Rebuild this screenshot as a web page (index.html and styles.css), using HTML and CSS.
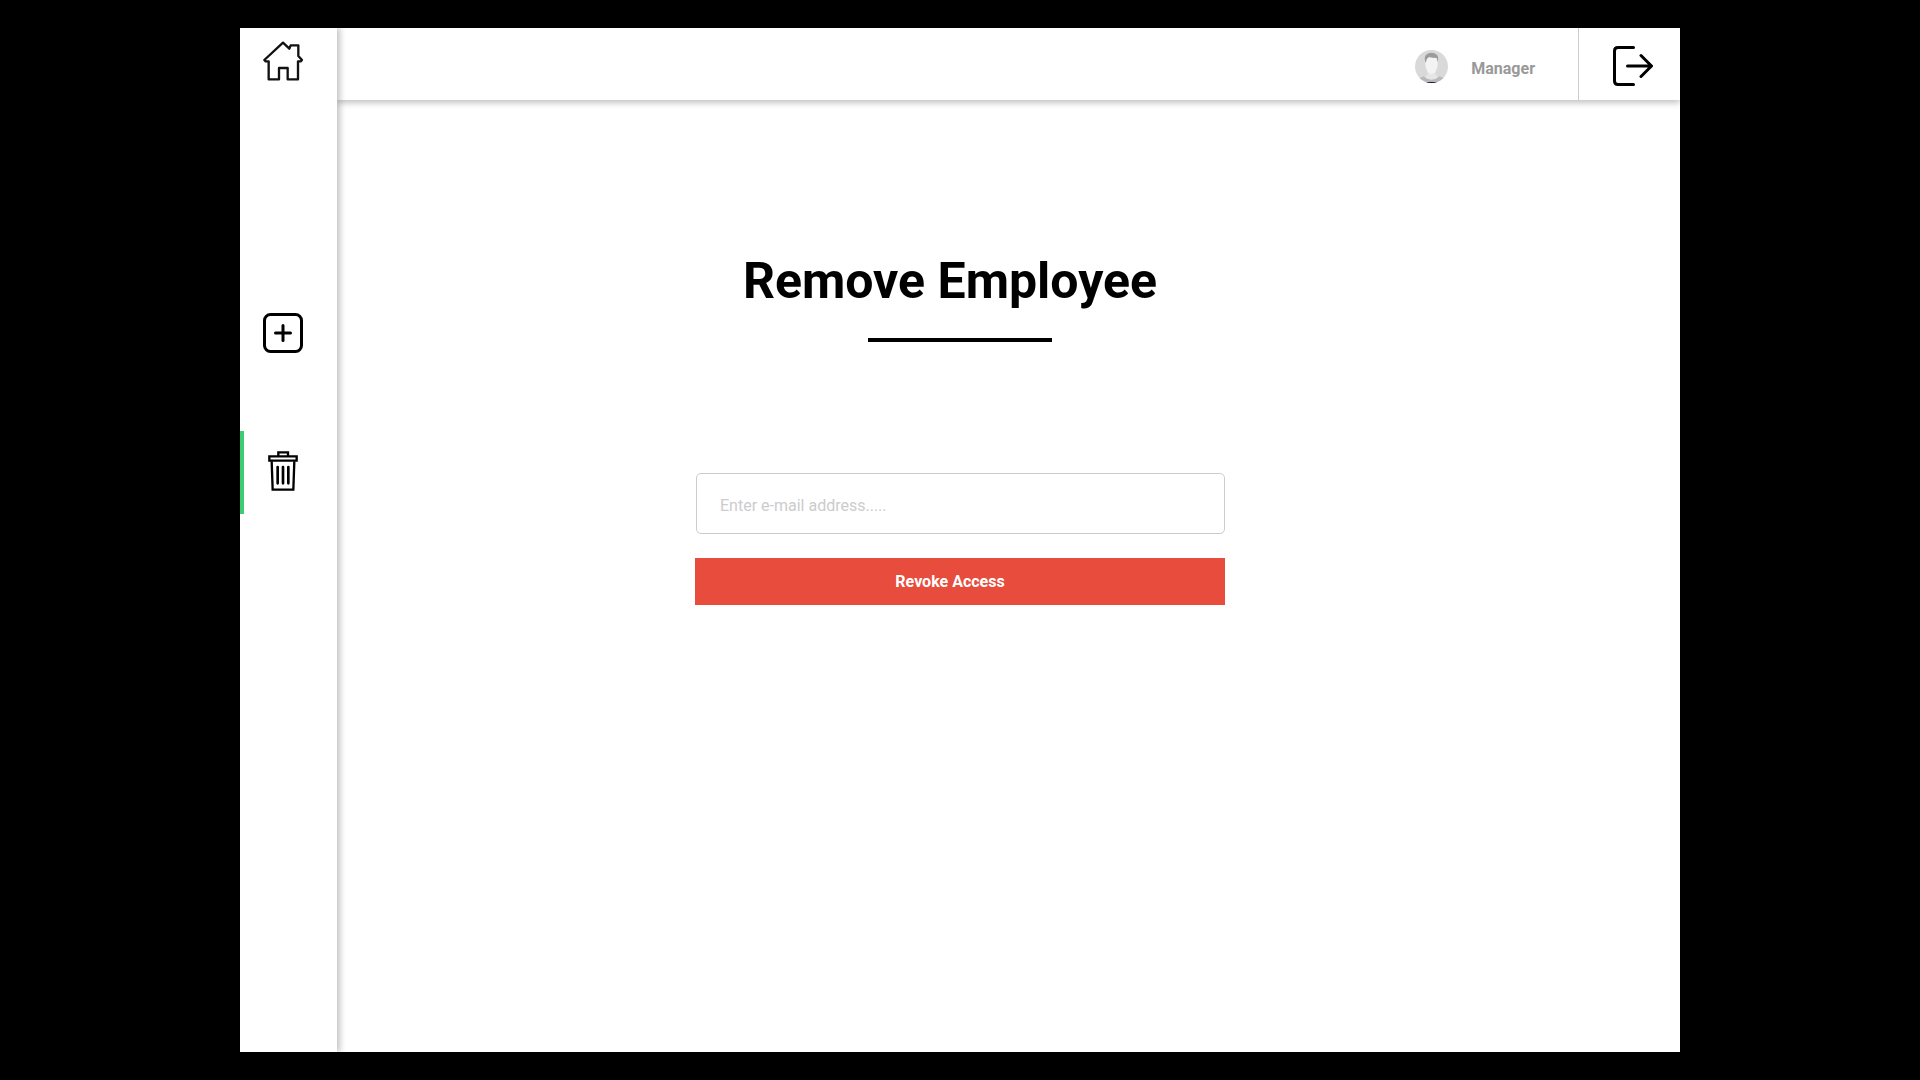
FILE: index.html
```html
<!DOCTYPE html>
<html lang="en">
<head>
  <meta charset="utf-8">
  <meta name="viewport" content="width=device-width, initial-scale=1">
  <title>Remove Employee</title>
  <link rel="stylesheet" href="styles.css">
</head>
<body>
  <div class="shell">
    <nav class="sidebar" aria-label="Main">
      <a class="nav-link nav-home" href="#home" aria-label="Home">
        <svg class="icon" viewBox="0 0 120 120" fill="none" stroke="#111" stroke-width="7" stroke-linejoin="round">
          <path d="M60 5 L79 23 L83 13 H106 V45 L117 57 L113 61 H105 V115 H74 V81 H48 V115 H17 V61 H8 L4 57 Z"/>
        </svg>
      </a>
      <a class="nav-link" href="#add" aria-label="Add employee">
        <svg class="icon" viewBox="0 0 40 40" fill="none" stroke="#000" stroke-width="3" stroke-linecap="round">
          <rect x="1.5" y="1.5" width="37" height="37" rx="6"/>
          <path d="M20 12.5 V27.5 M12.5 20 H27.5"/>
        </svg>
      </a>
      <a class="nav-link nav-active" href="#remove" aria-label="Remove employee" aria-current="page">
        <svg class="icon" viewBox="0 0 120 120" fill="none" stroke="#000" stroke-width="7">
          <path d="M46 14 V4 H75 V14 M19 16 H101 V29 H19 Z"/>
          <path d="M26 31 L29 116 H91 L94 31"/>
          <path stroke-width="8" stroke-linecap="round" d="M44 48 V97 M60 48 V97 M76 48 V97"/>
        </svg>
      </a>
    </nav>
    <div class="page">
      <header class="topbar">
        <div class="user">
          <svg class="avatar" viewBox="0 0 99 99" aria-hidden="true">
            <clipPath id="face-clip"><circle cx="49.5" cy="49.5" r="49.5"/></clipPath>
            <g clip-path="url(#face-clip)">
              <rect width="99" height="99" fill="#d9d9d9"/>
              <path fill="#b9b9b9" d="M10 99 V88 Q22 78 36 78 H64 Q78 78 90 88 V99 Z"/>
              <path fill="#e6e6e6" d="M37 62 H62 V76 L72 80 Q50 98 27 80 L37 76 Z"/>
              <path fill="#f3f3f3" d="M31 24 H68 V44 Q66 62 56 70 Q49 75 43 70 Q33 62 31 44 Z"/>
              <path fill="#9b9b9b" d="M31 37 Q25 16 38 11 Q52 5 62 12 Q73 16 68 37 L65 24 Q52 24 44 20 Q34 24 33 37 Z"/>
              <path fill="#151530" d="M30 96 H69 V99 H30 Z"/>
            </g>
          </svg>
          <span class="user-name">Manager</span>
        </div>
        <button class="logout" type="button" aria-label="Log out">
          <svg class="icon" viewBox="0 0 40 40" fill="none" stroke="#000" stroke-width="3" stroke-linecap="round" stroke-linejoin="round">
            <path d="M20.5 1.5 H5 Q1.5 1.5 1.5 5 V35 Q1.5 38.5 5 38.5 H20.5"/>
            <path d="M14.5 20 H38 M28 9.5 L38.5 20 L28 30.5"/>
          </svg>
        </button>
      </header>
      <main class="content">
        <h1 class="title">Remove Employee</h1>
        <hr class="rule">
        <form class="form">
          <input class="email" type="email" placeholder="Enter e-mail address....." aria-label="E-mail address">
          <button class="revoke" type="button">Revoke Access</button>
        </form>
      </main>
    </div>
  </div>
</body>
</html>
```
FILE: styles.css
```css
* {
  box-sizing: border-box;
}

body {
  margin: 0;
  background: #000;
  font-family: Roboto, "Liberation Sans", sans-serif;
  font-size: 16px;
}

.shell {
  display: flex;
  min-height: calc(100vh - 56px);
  margin: 28px 12.5%;
  background: #fff;
  overflow: hidden;
}

.sidebar {
  position: relative;
  z-index: 1;
  display: flex;
  flex-direction: column;
  gap: 56px;
  flex: 0 0 97px;
  background: #fff;
  box-shadow: 3px 0 6px rgba(0, 0, 0, 0.24);
}

.nav-link {
  display: flex;
  align-items: center;
  justify-content: center;
  height: 83px;
  padding: 0 11px 2px 0;
}

.nav-home {
  height: 67px;
  margin-bottom: 141px;
}

.nav-active {
  padding: 0 15px 4px 0;
  border-left: 4px solid #3dcb74;
}

.icon {
  display: block;
  width: 40px;
  height: 40px;
}

.page {
  flex: 1;
  min-width: 0;
}

.topbar {
  display: flex;
  justify-content: flex-end;
  height: 72px;
  box-shadow: 0 3px 6px rgba(0, 0, 0, 0.24);
}

.user {
  display: flex;
  align-items: center;
  gap: 23px;
  padding: 4px 43px 0 0;
}

.avatar {
  width: 33px;
  height: 33px;
}

.user-name {
  padding-top: 4px;
  color: #999;
  font-weight: 700;
}

.logout {
  width: 102px;
  padding: 4px 0 0 34px;
  border: 0;
  border-left: 1px solid #ccc;
  background: none;
}

.content {
  display: flex;
  flex-direction: column;
  align-items: center;
  padding: 151px 97px 40px 0;
}

.title {
  margin: 0;
  padding-right: 20px;
  font-size: 50px;
  line-height: 60px;
  font-weight: 700;
}

.rule {
  width: 184px;
  height: 4px;
  margin: 27px 0 0;
  border: 0;
  background: #000;
}

.form {
  display: flex;
  flex-direction: column;
  gap: 24px;
  width: 100%;
  max-width: 530px;
  margin-top: 131px;
}

.email {
  height: 61px;
  margin-left: 1px;
  padding: 4px 23px 0;
  border: 1px solid #ccc;
  border-radius: 5px;
  background: #fff;
  color: #000;
  font: inherit;
}

.email::placeholder {
  color: #ccc;
}

.revoke {
  height: 47px;
  padding: 0 20px 0 0;
  border: 0;
  background: #e84c3d;
  color: #fff;
  font: inherit;
  font-weight: 700;
}
```
